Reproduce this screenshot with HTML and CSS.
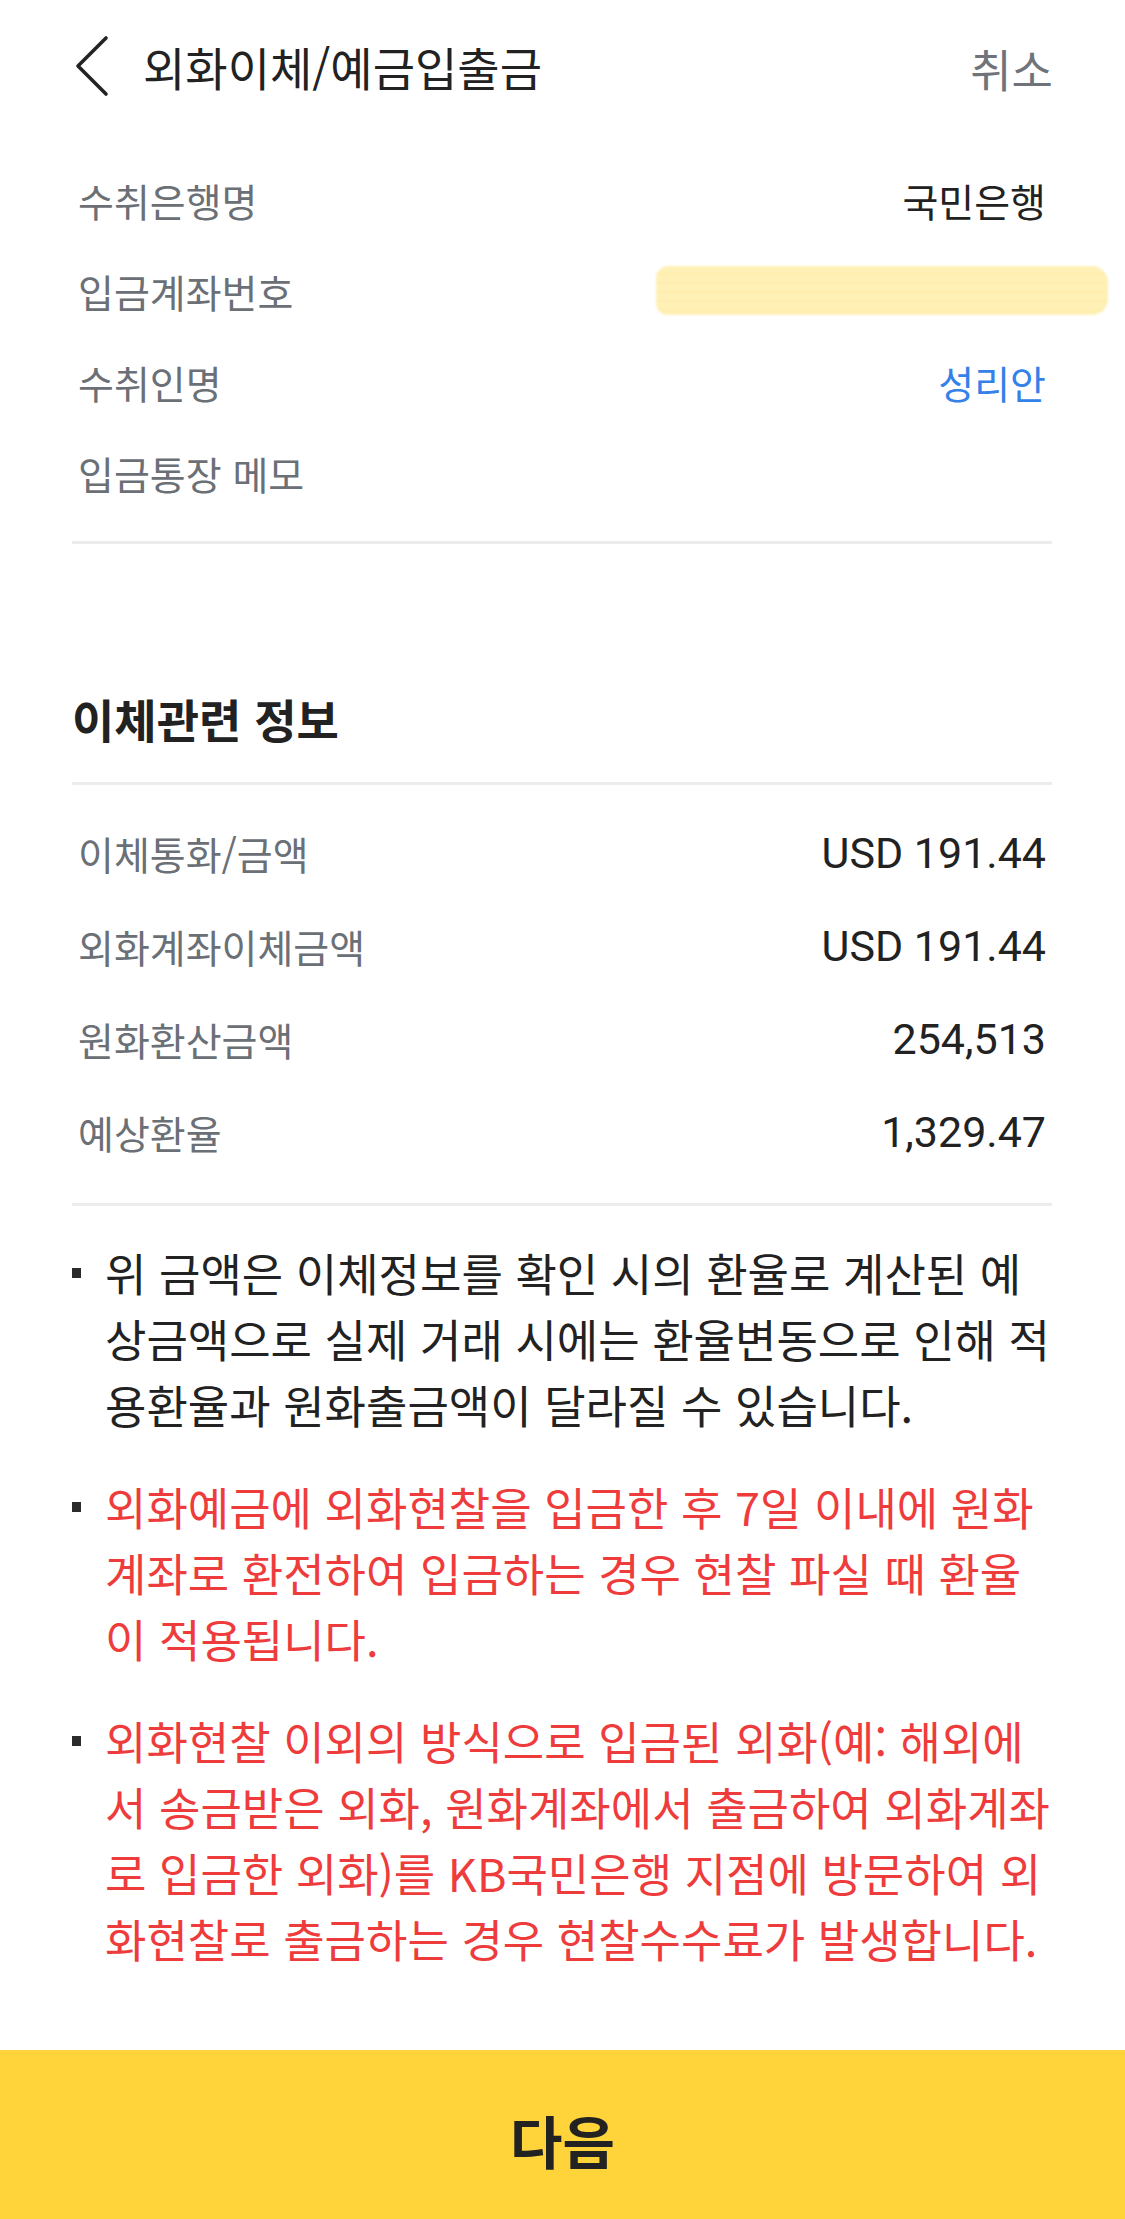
FILE: index.html
```html
<!DOCTYPE html>
<html lang="ko">
<head>
<meta charset="utf-8">
<title>외화이체/예금입출금</title>
<link rel="stylesheet" href="styles.css">
</head>
<body>
<div class="page">
  <header class="topbar">
    <div class="topbar-left">
      <svg class="back" width="40" height="66" viewBox="0 0 40 66" aria-hidden="true">
        <path d="M34 5 L6 33 L34 61" fill="none" stroke="#222" stroke-width="3.6" stroke-linecap="round" stroke-linejoin="round"/>
      </svg>
      <h1 class="title">외화이체/예금입출금</h1>
    </div>
    <span class="cancel">취소</span>
  </header>

  <main class="content">
    <section class="info info-top">
      <div class="row row-top">
        <span class="label">수취은행명</span>
        <span class="value">국민은행</span>
      </div>
      <div class="row row-top">
        <span class="label">입금계좌번호</span>
        <span class="redacted"></span>
      </div>
      <div class="row row-top">
        <span class="label">수취인명</span>
        <span class="value value-link">성리안</span>
      </div>
      <div class="row row-top">
        <span class="label">입금통장 메모</span>
        <span class="value"></span>
      </div>
    </section>

    <hr class="divider divider-1">

    <h2 class="heading">이체관련 정보</h2>

    <hr class="divider divider-2">

    <section class="info info-bottom">
      <div class="row row-bottom">
        <span class="label">이체통화/금액</span>
        <span class="value value-num">USD 191.44</span>
      </div>
      <div class="row row-bottom">
        <span class="label">외화계좌이체금액</span>
        <span class="value value-num">USD 191.44</span>
      </div>
      <div class="row row-bottom">
        <span class="label">원화환산금액</span>
        <span class="value value-num">254,513</span>
      </div>
      <div class="row row-bottom">
        <span class="label">예상환율</span>
        <span class="value value-num">1,329.47</span>
      </div>
    </section>

    <hr class="divider divider-3">

    <ul class="notes">
      <li class="note">위 금액은 이체정보를 확인 시의 환율로 계산된 예<br>상금액으로 실제 거래 시에는 환율변동으로 인해 적<br>용환율과 원화출금액이 달라질 수 있습니다.</li>
      <li class="note note-warn">외화예금에 외화현찰을 입금한 후 7일 이내에 원화<br>계좌로 환전하여 입금하는 경우 현찰 파실 때 환율<br>이 적용됩니다.</li>
      <li class="note note-warn">외화현찰 이외의 방식으로 입금된 외화(예: 해외에<br>서 송금받은 외화, 원화계좌에서 출금하여 외화계좌<br>로 입금한 외화)를 KB국민은행 지점에 방문하여 외<br>화현찰로 출금하는 경우 현찰수수료가 발생합니다.</li>
    </ul>
  </main>

  <button class="next-btn" type="button">다음</button>
</div>
</body>
</html>
```

FILE: styles.css
```css
* {
  box-sizing: border-box;
}

html, body {
  margin: 0;
  padding: 0;
  background: #ffffff;
}

body {
  font-family: "Noto Sans CJK KR", "Noto Sans", sans-serif;
  color: #222222;
}

.page {
  min-height: 100vh;
  display: flex;
  flex-direction: column;
}

/* Header */
.topbar {
  height: 132px;
  display: flex;
  align-items: center;
  justify-content: space-between;
  padding: 0 72px 0 72px;
}

.topbar-left {
  display: flex;
  align-items: center;
  gap: 31px;
}

.back {
  display: block;
  flex: none;
}

.title {
  margin: 0;
  font-size: 46px;
  font-weight: 400;
  line-height: 60px;
  color: #222222;
}

.cancel {
  font-size: 45px;
  line-height: 60px;
  color: #707379;
  padding-top: 6px;
}

/* Content */
.content {
  padding: 0 73px 0 72px;
}

.info-top {
  padding-top: 22px;
}

.info-bottom {
  padding-top: 21px;
}

.row {
  display: flex;
  align-items: center;
  justify-content: space-between;
  padding: 0 6px;
}

.row-top {
  height: 91px;
}

.row-bottom {
  height: 93px;
}

.label {
  font-size: 39px;
  color: #6b6f76;
  white-space: nowrap;
}

.value {
  font-size: 39px;
  color: #222222;
  white-space: nowrap;
}

.value-link {
  color: #3481ea;
}

.value-num {
  font-family: Roboto, "Noto Sans CJK KR", sans-serif;
  font-size: 43px;
  color: #222222;
}

.redacted {
  display: block;
  width: 452px;
  height: 49px;
  margin-right: -62px;
  border-radius: 12px 16px 16px 12px;
  background:
    repeating-linear-gradient(180deg, rgba(255, 255, 255, 0) 0 7px, rgba(255, 230, 150, 0.35) 7px 9px),
    #fff0b6;
  filter: blur(0.9px);
}

.divider {
  border: 0;
  height: 3px;
  background: #ececec;
  margin: 0;
}

.divider-1 {
  margin-top: 23px;
}

.heading {
  margin: 144px 0 0 0;
  font-size: 46px;
  font-weight: 700;
  line-height: 60px;
  color: #222222;
}

.divider-2 {
  margin-top: 34px;
}

.divider-3 {
  margin-top: 25px;
}

/* Notes */
.notes {
  list-style: none;
  margin: 0 -40px 0 0;
  padding: 34px 0 0 0;
  display: flex;
  flex-direction: column;
  gap: 36px;
}

.note {
  position: relative;
  padding-left: 33px;
  font-size: 45px;
  line-height: 66px;
  color: #222222;
  white-space: nowrap;
}

.note::before {
  content: "";
  position: absolute;
  left: 0;
  top: 28px;
  width: 9px;
  height: 10px;
  background: #2b2b2b;
}

.note-warn {
  color: #ee3c3c;
}

/* Bottom button */
.next-btn {
  margin-top: auto;
  height: 169px;
  width: 100%;
  border: 0;
  background: #ffd33a;
  font-family: "Noto Sans CJK KR", sans-serif;
  font-size: 57px;
  font-weight: 700;
  color: #222222;
  padding: 8px 0 0 0;
}
```
